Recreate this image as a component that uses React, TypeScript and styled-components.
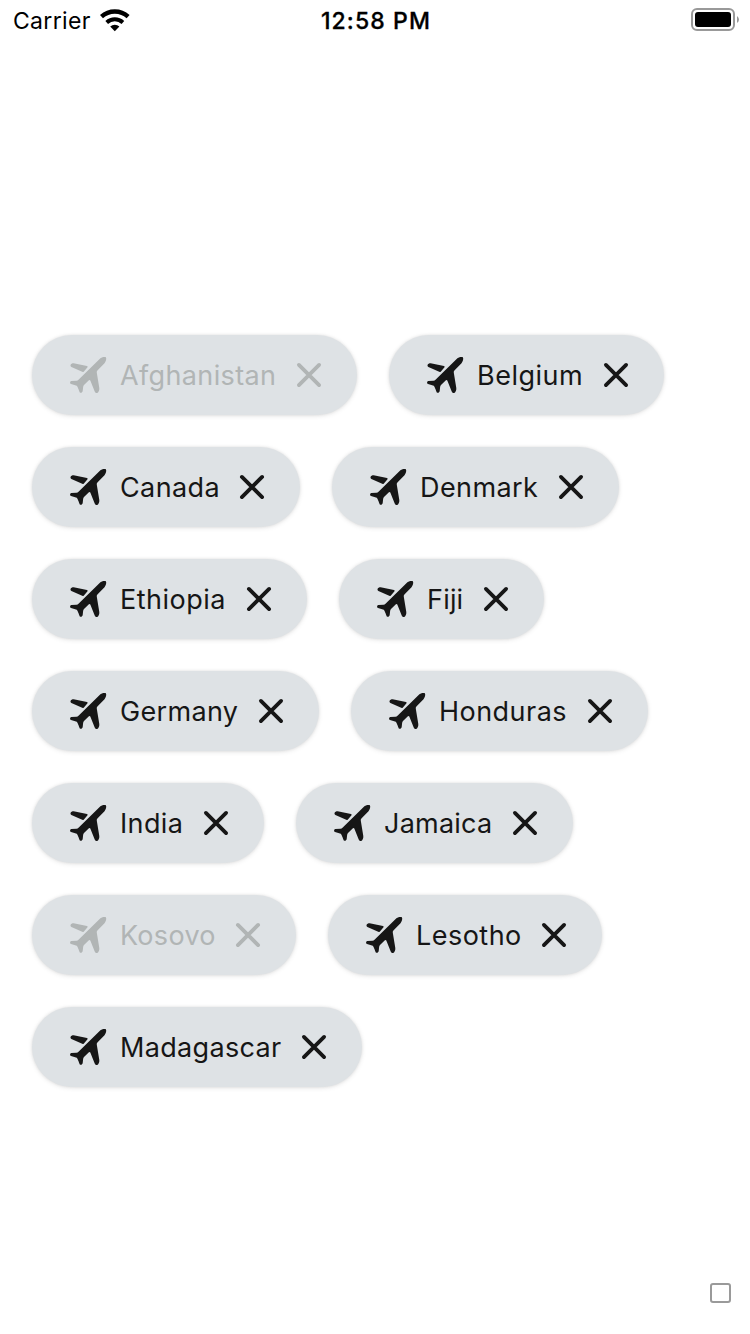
import React from 'react';
import styled, { createGlobalStyle } from 'styled-components';

const GlobalStyle = createGlobalStyle`
  * { box-sizing: border-box; }
  body {
    margin: 0;
    background: #fff;
    color: #000;
    font-family: Inter, "Liberation Sans", sans-serif;
  }
`;

const Screen = styled.div`
  display: flex;
  flex-direction: column;
  width: 750px;
  height: 1334px;
  overflow: hidden;
`;

const StatusBar = styled.header`
  display: grid;
  grid-template-columns: 1fr auto 1fr;
  align-items: center;
  height: 40px;
  padding: 0 11px 0 13px;
  font-size: 23px;
  line-height: 38px;
`;

const Carrier = styled.div`
  display: flex;
  align-items: center;
  gap: 9px;
  letter-spacing: 0.32px;
`;

const StatusText = styled.span`
  padding-top: 2px;
`;

const Clock = styled.div`
  padding-top: 2px;
  font-weight: 500;
  letter-spacing: 1.1px;
  -webkit-text-stroke: 0.3px #000;
`;

const Battery = styled.div`
  display: flex;
  justify-content: flex-end;
`;

const ChipList = styled.main`
  display: flex;
  flex-wrap: wrap;
  align-content: flex-start;
  gap: 32px;
  flex: 1;
  padding: 295px 32px 0;
`;

const Chip = styled.div<{ $disabled?: boolean }>`
  display: flex;
  align-items: center;
  gap: 12px;
  height: 80px;
  padding: 0 28px 0 36px;
  border-radius: 40px;
  background: #dee2e5;
  color: ${(p) => (p.$disabled ? '#b1b5b5' : '#161616')};
  box-shadow: 0 0 3px rgba(0, 0, 0, 0.08), 0 1px 5px rgba(0, 0, 0, 0.1);
`;

const Label = styled.span<{ $width: number; $tracking: number }>`
  width: ${(p) => p.$width}px;
  padding-top: 2px;
  font-size: 27px;
  line-height: 40px;
  letter-spacing: ${(p) => p.$tracking}px;
  white-space: nowrap;
`;

const Footer = styled.footer`
  display: flex;
  justify-content: flex-end;
  padding: 0 19px 31px;
`;

const Square = styled.div`
  width: 21px;
  height: 20px;
  border: 2px solid #9a9a9a;
  border-radius: 3px;
`;

const PlaneIcon = () => (
  <svg width="40" height="40" viewBox="-2 -2 40 40" fill="currentColor">
    <path d="M30.400 1.300C32.500 -.1 35.300 -.3 36 .4C36.500 1.300 36.200 4 34.500 6.200L27.400 13.400Q26.500 14.400 26.800 15.800L29.300 31C29.500 33.500 28.600 35.200 27.300 35.900C26 36.400 25.200 35.600 24.600 34.200L20.300 23.600Q19.800 22.400 18.900 23.200L14 28.100Q13.200 29 13.100 30.200L12.700 34C12.400 35.500 11 36.300 9.800 35.400C9.400 35 9 33.500 8.200 31.600Q7.600 30.300 7.300 29.600Q6.800 28.800 6 28.600L1 27C-.3 26.600 -.3 24.200 1.300 24L6.500 23.700Q7.700 23.600 8.500 22.800Z" />
    <path d="M1.400 9.900C-.4 8.700 .6 6.200 3.600 6.200L17 8.900Q18.200 9.500 17.500 10.300L13.900 14.400Q13.200 15.200 12.200 14.800Z" />
  </svg>
);

const CloseIcon = () => (
  <svg width="40" height="40" viewBox="0 0 40 40" fill="none" stroke="currentColor" strokeWidth="3.8" strokeLinecap="round">
    <path d="M9.900 9.900L30.100 30.100M30.100 9.900L9.900 30.100" />
  </svg>
);

const WifiIcon = () => (
  <svg width="30" height="24" viewBox="0 0 30 24">
    <path d="M1.500 8.700A19.600 19.600 0 0 1 28.100 8.700" fill="none" stroke="#000" strokeWidth="4.400" />
    <path d="M6.700 14.400A12.200 12.200 0 0 1 22.900 14.400" fill="none" stroke="#000" strokeWidth="4" />
    <path d="M14.800 23.200L10.200 18.600A6.800 6.800 0 0 1 19.400 18.600Z" />
  </svg>
);

const BatteryIcon = () => (
  <svg width="48" height="24" viewBox="0 0 48 24">
    <rect x="1" y="1" width="42" height="21" rx="5" fill="none" stroke="#999" strokeWidth="2" />
    <rect x="4" y="4" width="36" height="15" rx="3" />
    <path d="M46 8Q48 9.500 48 11.500Q48 13.500 46 15Z" fill="#999" />
  </svg>
);

const countries = [
  { name: 'Afghanistan', width: 157, tracking: 0.36, disabled: true },
  { name: 'Belgium', width: 107, tracking: 0.5 },
  { name: 'Canada', width: 100, tracking: 0.4 },
  { name: 'Denmark', width: 119, tracking: 0.42 },
  { name: 'Ethiopia', width: 107, tracking: 0.5 },
  { name: 'Fiji', width: 37, tracking: 0.2 },
  { name: 'Germany', width: 119, tracking: 0.33 },
  { name: 'Honduras', width: 129, tracking: 0.47 },
  { name: 'India', width: 64, tracking: 0.35 },
  { name: 'Jamaica', width: 109, tracking: 0.22 },
  { name: 'Kosovo', width: 96, tracking: 0.3, disabled: true },
  { name: 'Lesotho', width: 106, tracking: 0.47 },
  { name: 'Madagascar', width: 162, tracking: 0.32 },
];

export default function App() {
  return (
    <Screen>
      <GlobalStyle />
      <StatusBar>
        <Carrier>
          <StatusText>Carrier</StatusText>
          <WifiIcon />
        </Carrier>
        <Clock>12:58 PM</Clock>
        <Battery>
          <BatteryIcon />
        </Battery>
      </StatusBar>
      <ChipList>
        {countries.map((c) => (
          <Chip key={c.name} $disabled={c.disabled}>
            <PlaneIcon />
            <Label $width={c.width} $tracking={c.tracking}>{c.name}</Label>
            <CloseIcon />
          </Chip>
        ))}
      </ChipList>
      <Footer>
        <Square />
      </Footer>
    </Screen>
  );
}
